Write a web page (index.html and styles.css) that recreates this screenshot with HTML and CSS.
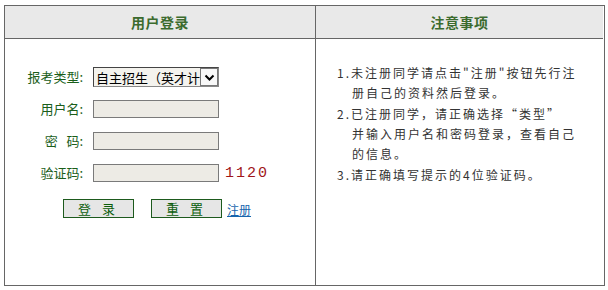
FILE: index.html
```html
<!DOCTYPE html>
<html lang="zh-CN">
<head>
<meta charset="utf-8">
<title>用户登录</title>
<link rel="stylesheet" href="styles.css">
</head>
<body>
<div class="panel">
  <div class="col col-left">
    <div class="head">用户登录</div>
    <div class="body">
      <form class="form">
        <label class="lbl">报考类型:</label>
        <span class="select-wrap">
          <select class="sel"><option>自主招生（英才计划）</option></select>
          <span class="arrow"><svg width="11" height="7" viewBox="0 0 11 7"><path d="M1.5 1.5 L5.5 5.5 L9.5 1.5" fill="none" stroke="#000" stroke-width="2"/></svg></span>
        </span>
        <span></span>

        <label class="lbl">用户名:</label>
        <input class="inp" type="text">
        <span></span>

        <label class="lbl">密&nbsp;&nbsp;&nbsp;码:</label>
        <input class="inp" type="password">
        <span></span>

        <label class="lbl">验证码:</label>
        <input class="inp" type="text">
        <span class="code">1120</span>
      </form>
      <div class="actions">
        <button class="btn" type="button">登 录</button>
        <button class="btn" type="button">重 置</button>
        <a class="reg" href="#">注册</a>
      </div>
    </div>
  </div>
  <div class="col col-right">
    <div class="head">注意事项</div>
    <div class="body notes">
      <p class="item">1.未注册同学请点击"注册"按钮先行注<br>册自己的资料然后登录。</p>
      <p class="item">2.已注册同学，请正确选择“类型”<br>并输入用户名和密码登录，查看自己<br>的信息。</p>
      <p class="item">3.请正确填写提示的4位验证码。</p>
    </div>
  </div>
</div>
</body>
</html>
```
FILE: styles.css
```css
html, body {
  margin: 0;
  padding: 0;
  background: #fff;
}
body {
  font-family: "Noto Sans CJK SC", "Liberation Sans", sans-serif;
  font-size: 12px;
  padding: 5px 0 0 4px;
}
.panel {
  display: grid;
  grid-template-columns: 311px 287px;
  width: 599px;
  height: 279px;
  border: 1px solid #666;
}
.col-left {
  border-right: 1px solid #666;
}
.col {
  display: flex;
  flex-direction: column;
}
.head {
  height: 32px;
  background: #e9e9e9;
  border-bottom: 1px solid #666;
  color: #3b6b2e;
  font-weight: bold;
  font-size: 14px;
  display: flex;
  align-items: center;
  justify-content: center;
  letter-spacing: 0.5px;
}
.form {
  display: grid;
  grid-template-columns: 78px 126px auto;
  grid-auto-rows: 32px;
  column-gap: 10px;
  align-items: center;
  padding-top: 22px;
  margin: 0;
}
.lbl {
  text-align: right;
  color: #1a5e1a;
  font-size: 13px;
  line-height: 16px;
}
.select-wrap {
  position: relative;
  display: block;
  width: 126px;
  height: 20px;
}
.sel {
  appearance: none;
  -webkit-appearance: none;
  width: 126px;
  height: 20px;
  margin: 0;
  padding: 0 0 0 2px;
  border: 1px solid #888;
  border-top-color: #444;
  border-left-color: #444;
  background: #f4f3ee;
  font-family: "Noto Sans CJK SC", sans-serif;
  font-size: 13px;
  color: #000;
  border-radius: 0;
}
.arrow {
  position: absolute;
  right: 1px;
  top: 1px;
  width: 18px;
  height: 18px;
  border: 1px solid #777;
  background: #f8f8f8;
  display: flex;
  align-items: center;
  justify-content: center;
  box-sizing: border-box;
}
.inp {
  width: 126px;
  height: 18px;
  box-sizing: border-box;
  margin: 0;
  border: 1px solid #7a7a7a;
  background: #edebe5;
  padding: 0 2px;
  border-radius: 0;
}
.code {
  margin-left: -4px;
  font-family: "Liberation Mono", monospace;
  font-size: 15px;
  color: #a01418;
  letter-spacing: 2px;
}
.actions {
  display: flex;
  align-items: center;
  padding: 10px 0 0 58px;
}
.btn {
  width: 71px;
  height: 19px;
  margin: 0 17px 0 0;
  padding: 0;
  border: 1px solid #1d5a1d;
  background: #e6e6e6;
  color: #0d5e0d;
  font-family: "Noto Sans CJK SC", sans-serif;
  font-size: 13px;
  line-height: 17px;
  letter-spacing: 4px;
  border-radius: 0;
}
.btn + .btn {
  margin-right: 5px;
}
.reg {
  color: #1765ad;
  font-size: 12px;
  text-decoration: underline;
  margin-top: 2px;
}
.notes {
  padding: 24px 0 0 21px;
  color: #333;
  letter-spacing: 2px;
  line-height: 20px;
}
.item {
  margin: 0 0 1px 0;
  padding-left: 15px;
  text-indent: -15px;
  white-space: nowrap;
}
```
